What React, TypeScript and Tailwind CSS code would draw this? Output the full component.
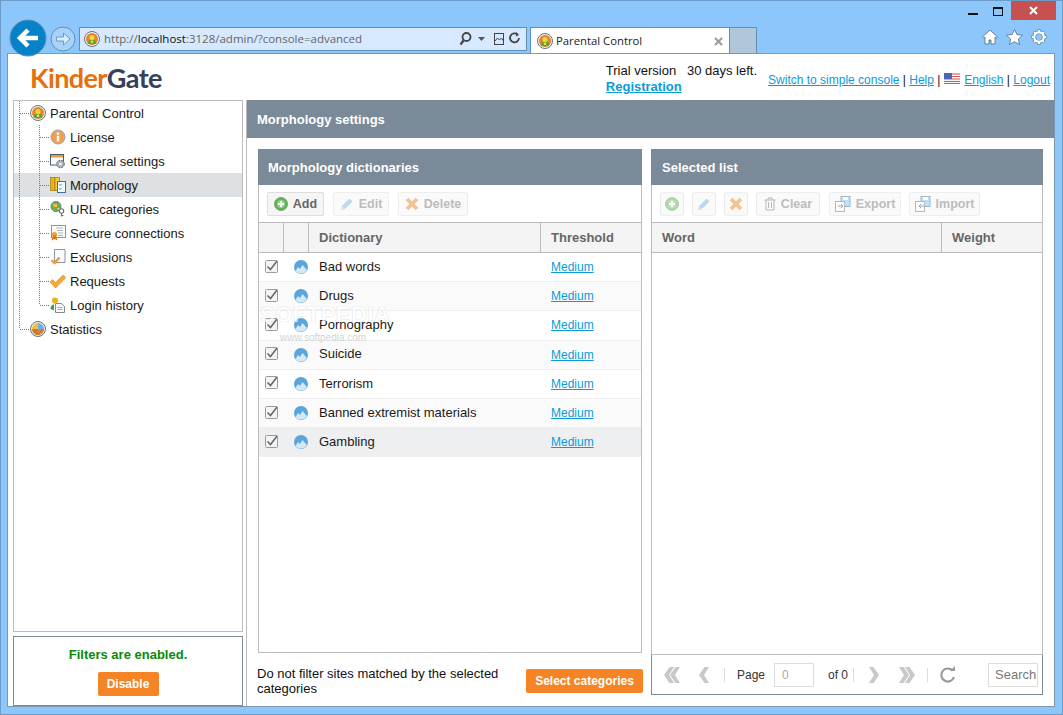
import * as React from 'react';

const ARIAL = "font-['Liberation_Sans',Arial,sans-serif]";

function AppIcon({ size = 16 }: { size?: number }) {
  return (
    <svg width={size} height={size} viewBox="0 0 16 16" className="shrink-0">
      <circle cx="8" cy="8" r="7.5" fill="#f2f2f2" stroke="#6b7280" strokeWidth="1" />
      <circle cx="8" cy="8" r="6" fill="#e8832a" />
      <path d="M3.6 12 C4 9.5 5.5 9 8 9 C10.5 9 12 9.5 12.4 12 C11 13.6 5 13.6 3.6 12Z" fill="#3fae3a" />
      <circle cx="8" cy="6.4" r="2.5" fill="#f6d43c" />
      <rect x="6.8" y="9.5" width="2.4" height="2.5" fill="#f6d43c" />
    </svg>
  );
}

function LicenseIcon() {
  return (
    <svg width="16" height="16" viewBox="0 0 16 16" className="shrink-0">
      <circle cx="8" cy="8" r="7" fill="#f0a050" stroke="#9aa3ad" />
      <circle cx="8" cy="4.6" r="1.3" fill="#fff" />
      <rect x="6.8" y="6.8" width="2.4" height="5.6" fill="#fff" />
    </svg>
  );
}

function SettingsIcon() {
  return (
    <svg width="16" height="16" viewBox="0 0 16 16" className="shrink-0">
      <rect x="0.5" y="1.5" width="13" height="10.5" fill="#fff" stroke="#4a5a70" />
      <rect x="1" y="2" width="12" height="2.5" fill="#ee9a3a" />
      <circle cx="10.5" cy="11" r="3.8" fill="#aab4bf" stroke="#5f6b78" strokeDasharray="2 1" />
      <circle cx="10.5" cy="11" r="1.3" fill="#fff" />
    </svg>
  );
}

function MorphologyIcon() {
  return (
    <svg width="16" height="16" viewBox="0 0 16 16" className="shrink-0">
      <rect x="0.5" y="0.5" width="4.500" height="13" fill="#e8b318" stroke="#9c7a10" strokeWidth="0.7" />
      <rect x="5" y="0.5" width="4.500" height="13" fill="#f3cb38" stroke="#9c7a10" strokeWidth="0.7" />
      <rect x="7.5" y="4.5" width="8" height="11" fill="#f4f9ff" stroke="#3f6f9f" />
      <path d="M9 7.5l1 1 1.6-1.6M9 11.5l1 1 1.6-1.6" fill="none" stroke="#2f80c8" strokeWidth="1" />
    </svg>
  );
}

function UrlIcon() {
  return (
    <svg width="16" height="16" viewBox="0 0 16 16" className="shrink-0">
      <circle cx="6" cy="5.5" r="5" fill="#6fb04a" stroke="#5a7fa0" />
      <path d="M3 3h4v3H4zM7 7h3v2H8z" fill="#f0c040" />
      <circle cx="11.5" cy="10" r="2.2" fill="#fff" stroke="#5a6f88" strokeWidth="1.1" />
      <path d="M11.5 12v3.5M11.5 14.5h2" stroke="#5a6f88" strokeWidth="1.1" />
    </svg>
  );
}

function SecureIcon() {
  return (
    <svg width="16" height="16" viewBox="0 0 16 16" className="shrink-0">
      <rect x="1.5" y="0.5" width="14" height="12" fill="#fdfdfd" stroke="#8a96a3" />
      <path d="M6 3h7M7 5.5h6M8 8h5M8 10.500h5" stroke="#a8b2bc" />
      <circle cx="4.5" cy="9.5" r="2.6" fill="#f0a030" />
      <path d="M1.500 15.500l1.500-5h3l1.500 5-3-1.500z" fill="#e07818" />
    </svg>
  );
}

function ExclusionsIcon() {
  return (
    <svg width="16" height="16" viewBox="0 0 16 16" className="shrink-0">
      <path d="M4.500 0.500h10.500v13h-10.500z" fill="#f8fafc" stroke="#8a96a3" />
      <path d="M1.500 11l3 3 5-5.500" fill="none" stroke="#ee9a3a" strokeWidth="2.400" />
    </svg>
  );
}

function CheckIcon() {
  return (
    <svg width="16" height="16" viewBox="0 0 16 16" className="shrink-0">
      <path d="M0 9l2.500-2.500 3 3L13 2l3 2.500L5.500 15z" fill="#f4a838" stroke="#dd8a20" strokeWidth="0.600" />
    </svg>
  );
}

function LoginIcon() {
  return (
    <svg width="16" height="16" viewBox="0 0 16 16" className="shrink-0">
      <circle cx="5" cy="3.5" r="3" fill="#e8b318" />
      <path d="M0.5 12c0-3 1.500-4.500 3.500-4.500v6z" fill="#35a838" />
      <path d="M5.500 6.500h6l3 3v6h-9z" fill="#fbfcfd" stroke="#7d8a97" />
      <path d="M7.500 10.500h5M7.500 12.500h5" stroke="#9aa5b0" />
    </svg>
  );
}

function StatsIcon() {
  return (
    <svg width="16" height="16" viewBox="0 0 16 16" className="shrink-0">
      <circle cx="8" cy="8" r="7.5" fill="#e9eef3" stroke="#6b7280" />
      <path d="M8 8V2a6 6 0 0 1 6 6z" fill="#6fb0e8" />
      <path d="M8 8h6a6 6 0 0 1-3 5.200z" fill="#d27a2e" />
      <path d="M8 8l3 5.200A6 6 0 0 1 2 8z" fill="#d27a2e" />
      <path d="M8 8H2a6 6 0 0 1 6-6z" fill="#f2c230" />
    </svg>
  );
}

function TreeLines({ level, last }: { level: number; last?: boolean }) {
  const w = level === 1 ? 16 : 36;
  return (
    <svg width={w} height="24" className="shrink-0" stroke="#777" strokeDasharray="1 1" fill="none">
      {level === 1 ? (
        <>
          <path d={last ? 'M5.5 0V12' : 'M5.5 0V24'} />
          <path d="M6 12.500H16" />
        </>
      ) : (
        <>
          <path d="M5.500 0V24" />
          <path d={last ? 'M25.500 0V12' : 'M25.500 0V24'} />
          <path d="M26 12.500H36" />
        </>
      )}
    </svg>
  );
}

const treeItems = [
  { label: 'License', icon: <LicenseIcon /> },
  { label: 'General settings', icon: <SettingsIcon /> },
  { label: 'Morphology', icon: <MorphologyIcon />, selected: true },
  { label: 'URL categories', icon: <UrlIcon /> },
  { label: 'Secure connections', icon: <SecureIcon /> },
  { label: 'Exclusions', icon: <ExclusionsIcon /> },
  { label: 'Requests', icon: <CheckIcon /> },
  { label: 'Login history', icon: <LoginIcon />, last: true },
];

function Tree() {
  return (
    <div className="flex-1 border border-[#bcbcbc] text-[13px] text-[#1a1a1a]">
      <div className="flex h-[24px] items-center">
        <TreeLines level={1} />
        <AppIcon />
        <span className="ml-[4px] pt-[2px]">Parental Control</span>
      </div>
      {treeItems.map((item) => (
        <div key={item.label} className={`flex h-[24px] items-center ${item.selected ? 'bg-[#dde1e3]' : ''}`}>
          <TreeLines level={2} last={item.last} />
          {item.icon}
          <span className="ml-[4px] pt-[2px]">{item.label}</span>
        </div>
      ))}
      <div className="flex h-[24px] items-center">
        <TreeLines level={1} last />
        <StatsIcon />
        <span className="ml-[4px] pt-[2px]">Statistics</span>
      </div>
    </div>
  );
}

function PlusIcon() {
  return (
    <svg width="14" height="14" viewBox="0 0 14 14" className="shrink-0">
      <circle cx="7" cy="7" r="6.500" fill="#58b84e" stroke="#7f9f7a" />
      <circle cx="7" cy="7" r="4" fill="#8fd486" />
      <path d="M7 4v6M4 7h6" stroke="#fff" strokeWidth="2" />
    </svg>
  );
}

function PencilIcon() {
  return (
    <svg width="14" height="14" viewBox="0 0 14 14" className="shrink-0">
      <path d="M1 13l1-4 7.500-7.500 3 3L5 12z" fill="#7db8e8" />
      <path d="M1 13l1-4 3 3z" fill="#f5d07a" />
    </svg>
  );
}

function CrossIcon() {
  return (
    <svg width="14" height="14" viewBox="0 0 14 14" className="shrink-0">
      <path d="M2 2l10 10M12 2L2 12" stroke="#f08a28" strokeWidth="3.600" />
    </svg>
  );
}

function TrashIcon() {
  return (
    <svg width="12" height="14" viewBox="0 0 12 14" fill="none" stroke="#777" className="shrink-0">
      <path d="M0.500 3h11M4 3V1h4v2M2 3v10h8V3M4.500 5v6M7.500 5v6" />
    </svg>
  );
}

function DiskIcon({ flip }: { flip?: boolean }) {
  return (
    <svg width="16" height="16" viewBox="0 0 16 16" className="shrink-0">
      <rect x="6" y="0.500" width="9" height="10" fill="#8fc3ee" stroke="#3f78ae" />
      <rect x="8" y="1" width="5" height="3" fill="#fff" />
      <rect x="0.500" y="5.500" width="9" height="10" fill="#fff" stroke="#6a7a8a" />
      <path d={flip ? 'M9 10H4l2-2M4 10l2 2' : 'M3 10h5l-2-2M8 10l-2 2'} fill="none" stroke="#4a5a6a" />
    </svg>
  );
}

function ToolBtn({
  label,
  icon,
  disabled,
  className = '',
}: {
  label?: string;
  icon: React.ReactNode;
  disabled?: boolean;
  className?: string;
}) {
  return (
    <div
      className={`flex h-[24px] items-center justify-center gap-[5px] rounded-[2px] border text-[12.5px] font-bold ${
        disabled ? 'border-[#eeeeee] bg-[#fafafa] text-[#bcbcbc]' : 'border-[#dedede] bg-[#f5f5f5] text-[#666]'
      } ${className}`}
    >
      <span className={disabled ? 'flex opacity-50' : 'flex'}>{icon}</span>
      {label && <span className="pt-[1px]">{label}</span>}
    </div>
  );
}

function CheckBox() {
  return (
    <svg width="14" height="14" viewBox="0 0 14 14" className="shrink-0">
      <rect x="0.500" y="0.500" width="12" height="12" rx="1" fill="#f4f4f4" stroke="#9a9a9a" />
      <path d="M2.500 6.500l3 3 6.500-8.500" fill="none" stroke="#666" strokeWidth="1.500" />
    </svg>
  );
}

function Ball() {
  return (
    <svg width="14" height="14" viewBox="0 0 14 14" className="shrink-0">
      <circle cx="7" cy="7" r="7" fill="#5aa5dc" />
      <path d="M1.500 11 L4 7 L6 9 L8.500 5 L12 9 L13 10 A7 7 0 0 1 1.500 11Z" fill="#d5e8f6" />
    </svg>
  );
}

const dictionaries = [
  'Bad words',
  'Drugs',
  'Pornography',
  'Suicide',
  'Terrorism',
  'Banned extremist materials',
  'Gambling',
];

function DictRow({ name, index }: { name: string; index: number }) {
  const hot = index === dictionaries.length - 1;
  return (
    <div
      className={`flex h-[29.2px] items-center border-b border-[#efefef] text-[13px] text-[#1a1a1a] ${
        hot ? 'bg-[#eeeff1]' : index % 2 ? 'bg-[#fafafa]' : 'bg-white'
      }`}
    >
      <div className="mb-[1px] flex w-[25px] justify-center pl-[1px]">
        <CheckBox />
      </div>
      <div className="flex w-[25px] justify-center pl-[8px]">
        <Ball />
      </div>
      <div className="mb-[1px] w-[232px] pl-[10px]">{name}</div>
      <a className="pl-[10px] text-[12px] text-[#0a9bd8] underline">Medium</a>
    </div>
  );
}

function Head({ className = '', children }: { className?: string; children?: React.ReactNode }) {
  return (
    <div className={`flex h-full items-center border-r border-[#bcbcbc] pl-[10px] ${className}`}>{children}</div>
  );
}

function Sep() {
  return <div className="h-[14px] w-px bg-[#dddddd]" />;
}

function Chevrons({ dir, double }: { dir: 'l' | 'r'; double?: boolean }) {
  const one = dir === 'l' ? 'M10 0L5 8l5 8H5.500L0 8l5.500-8z' : 'M0 0l5 8-5 8h4.500L10 8 4.500 0z';
  return (
    <svg width={double ? 16 : 10} height="16" viewBox={double ? '0 0 16 16' : '0 0 10 16'} fill="#c8c8c8" className="shrink-0">
      <path d={one} />
      {double && <path d={one} transform="translate(6 0)" />}
    </svg>
  );
}

export default function App() {
  return (
    <div className={`relative flex h-[715px] w-[1063px] flex-col overflow-hidden border border-[#6a9ac8] bg-[#8cc6fa] ${ARIAL}`}>
      {/* window buttons */}
      <div className="flex h-[19px] items-start justify-end pr-[6px]">
        <div className="mt-[12px] mr-[15px] h-[2px] w-[10px] bg-[#111]" />
        <div className="mt-[6px] mr-[8px] h-[9px] w-[10px] border border-t-2 border-[#111]" />
        <div className="flex h-[19px] w-[45px] items-center justify-center bg-[#c75050] text-white">
          <svg width="9" height="9" viewBox="0 0 9 9" stroke="#fff" strokeWidth="2">
            <path d="M1 1l7 7M8 1L1 8" />
          </svg>
        </div>
      </div>

      {/* browser toolbar */}
      <div className="flex h-[34px] items-start pl-[8px]">
        <svg width="38" height="38" viewBox="0 0 38 38" className="z-10 -mt-[1px] shrink-0">
          <circle cx="19" cy="19" r="18" fill="#0683c8" stroke="#5f90b8" />
          <path d="M29 19H12M19 11l-8 8 8 8" fill="none" stroke="#fff" strokeWidth="4.500" />
        </svg>
        <svg width="26" height="26" viewBox="0 0 26 26" className="mt-[6px] ml-[3px] shrink-0">
          <circle cx="13" cy="13" r="12" fill="#a6d2fb" stroke="#5f90b8" />
          <path d="M6.500 11h7V7l6.500 6-6.500 6v-4h-7z" fill="#d8ecff" stroke="#6f9cc0" />
        </svg>
        <div className="mt-[7px] ml-[3px] flex h-[24px] w-[448px] items-center border border-[#5f90b8] bg-[#d6e9fe] pr-[4px] pl-[4px] font-['Open_Sans',sans-serif] text-[11.5px] text-[#666]">
          <AppIcon />
          <span className="ml-[4px] flex-1">
            http://<span className="text-[#111]">localhost</span>:3128/admin/?console=advanced
          </span>
          <svg width="62" height="16" viewBox="0 0 62 16" fill="none" stroke="#444" className="shrink-0">
            <circle cx="6.500" cy="6" r="4" strokeWidth="1.800" />
            <path d="M3.500 9.500L0.500 13.500" strokeWidth="2.200" />
            <path d="M18 6h7l-3.500 4z" fill="#555" stroke="none" />
            <rect x="34.500" y="2.500" width="9" height="11" />
            <path d="M35 10l2.500-3 2 2 2-2 2 3" />
            <path d="M59 7a4.500 4.500 0 1 1-1.500-3.500" strokeWidth="1.800" />
            <path d="M56 1l3 3-3 1.500z" fill="#444" stroke="none" />
          </svg>
        </div>
        <div className="mt-[7px] ml-[3px] flex h-[27px] w-[200px] items-center border border-b-0 border-[#5f90b8] bg-white pr-[6px] pl-[6px] font-['Open_Sans',sans-serif] text-[11.3px] text-[#222]">
          <AppIcon />
          <span className="ml-[3px] flex-1">Parental Control</span>
          <svg width="9" height="9" viewBox="0 0 9 9" stroke="#999" strokeWidth="2">
            <path d="M1 1l7 7M8 1L1 8" />
          </svg>
        </div>
        <div className="mt-[7px] h-[27px] w-[27px] border border-b-0 border-l-0 border-[#5f90b8] bg-[#b0c6da]" />
        <div className="mt-[9px] ml-auto flex items-center gap-[8px] pr-[15px]">
          <svg width="16" height="16" viewBox="0 0 16 16" fill="#fff" stroke="#4a6a88" strokeWidth="0.800">
            <path d="M8 1L0.500 8l1.300 1L3 8v7h4v-4h2v4h4V8l1.200 1 1.300-1z" />
          </svg>
          <svg width="17" height="16" viewBox="0 0 17 16" fill="#fff" stroke="#4a6a88" strokeWidth="0.800">
            <path d="M8.500 0.500l2.400 5 5.600 0.700-4.100 3.800 1.100 5.500-5-2.800-5 2.800 1.100-5.500L0.500 6.200l5.600-0.700z" />
          </svg>
          <svg width="16" height="16" viewBox="0 0 16 16" fill="none">
            <path d="M8 0.500v3M8 12.500v3M0.500 8h3M12.500 8h3M2.700 2.700l2 2M11.300 11.300l2 2M13.300 2.700l-2 2M4.700 11.300l-2 2" stroke="#4a6a88" strokeWidth="3" />
            <circle cx="8" cy="8" r="4.800" stroke="#4a6a88" strokeWidth="3.400" />
            <path d="M8 1v3M8 12v3M1 8h3M12 8h3M3 3l2 2M11 11l2 2M13 3l-2 2M5 11l-2 2" stroke="#fff" strokeWidth="2" />
            <circle cx="8" cy="8" r="4.800" stroke="#fff" strokeWidth="2.400" />
          </svg>
        </div>
      </div>

      {/* page */}
      <div className="mr-[8px] mb-[8px] ml-[7px] flex flex-1 flex-col overflow-hidden bg-white text-[14px] shadow-[0_0_0_1px_#7a97b4]">
        <div className="flex h-[46px] shrink-0 items-center pr-[4px] pl-[22px]">
          <div className="font-['Lato',sans-serif] text-[27px] leading-none font-bold tracking-[-0.6px]">
            <span className="text-[#e86f0c]">Kinder</span>
            <span className="text-[#363f5c]">Gate</span>
          </div>
          <div className="mt-[4px] ml-auto text-[13px] leading-[16px] text-[#111]">
            <div className="whitespace-pre">Trial version   30 days left.</div>
            <a className="font-bold text-[#0a9bd8] underline">Registration</a>
          </div>
          <div className="mt-[6px] ml-[11px] flex items-center gap-[3.35px] text-[12px] text-[#111]">
            <a className="text-[#0a9bd8] underline">Switch to simple console</a>
            <span>|</span>
            <a className="text-[#0a9bd8] underline">Help</a>
            <span>|</span>
            <svg width="16" height="11" viewBox="0 0 16 11" className="mr-[1px] mb-[4px] shrink-0">
              <rect width="16" height="11" fill="#f4f4f4" />
              <path d="M0 1h16M0 3.500h16M0 6h16M0 8.500h16M0 10.500h16" stroke="#d8585a" />
              <rect width="8" height="6" fill="#4a66b8" />
            </svg>
            <a className="text-[#0a9bd8] underline">English</a>
            <span>|</span>
            <a className="text-[#0a9bd8] underline">Logout</a>
          </div>
        </div>

        <div className="flex min-h-0 flex-1">
          {/* left column */}
          <div className="flex w-[235px] shrink-0 flex-col gap-[4px] pl-[5px]">
            <Tree />
            <div className="flex h-[70px] shrink-0 flex-col items-center border border-[#7a8a98] pt-[8px]">
              <div className="text-[13px] font-bold text-[#0a8a0a]">Filters are enabled.</div>
              <div className="mt-[7px] flex h-[24px] w-[61px] items-center justify-center rounded-[2px] bg-[#f58426] text-[12px] font-bold text-white">
                Disable
              </div>
            </div>
          </div>

          {/* main */}
          <div className="ml-[3px] flex min-w-0 flex-1 flex-col border-l border-[#bcbcbc]">
            <div className="flex h-[38px] shrink-0 items-center bg-[#7a8a98] pt-[1px] pl-[10px] text-[13px] font-bold text-white">
              Morphology settings
            </div>
            <div className="flex min-h-0 flex-1 gap-[9px] pt-[11px] pr-[11px] pb-[11px] pl-[11px]">
              {/* dictionaries */}
              <div className="flex w-[384px] shrink-0 flex-col">
                <div className="flex h-[36px] shrink-0 items-center bg-[#7a8a98] pt-[1px] pl-[10px] text-[13px] font-bold text-white">
                  Morphology dictionaries
                </div>
                <div className="flex h-[468px] shrink-0 flex-col border border-t-0 border-[#bcbcbc]">
                  <div className="flex h-[37px] shrink-0 items-center gap-[9px] pl-[8px]">
                    <ToolBtn label="Add" icon={<PlusIcon />} className="w-[57px]" />
                    <ToolBtn label="Edit" icon={<PencilIcon />} disabled className="w-[56px]" />
                    <ToolBtn label="Delete" icon={<CrossIcon />} disabled className="w-[70px]" />
                  </div>
                  <div className="flex h-[31px] shrink-0 items-center border-y border-[#bcbcbc] bg-[#f4f4f4] text-[13px] font-bold text-[#666]">
                    <Head className="w-[25px]" />
                    <Head className="w-[25px]" />
                    <Head className="w-[232px]">Dictionary</Head>
                    <div className="pl-[10px]">Threshold</div>
                  </div>
                  {dictionaries.map((name, i) => (
                    <DictRow key={name} name={name} index={i} />
                  ))}
                </div>
                <div className="flex flex-1 items-center justify-between pt-[13px]">
                  <div className="-ml-[1px] w-[255px] text-[13px] leading-[15px] text-[#111]">
                    Do not filter sites matched by the selected categories
                  </div>
                  <div className="mr-[-1px] flex h-[24px] w-[117px] items-center justify-center rounded-[2px] bg-[#f58426] text-[12px] font-bold text-white">
                    Select categories
                  </div>
                </div>
              </div>

              {/* selected list */}
              <div className="flex min-w-0 flex-1 flex-col">
                <div className="flex h-[36px] shrink-0 items-center bg-[#7a8a98] pt-[1px] pl-[11px] text-[13px] font-bold text-white">
                  Selected list
                </div>
                <div className="flex min-h-0 flex-1 flex-col border border-t-0 border-[#bcbcbc]">
                  <div className="flex h-[37px] shrink-0 items-center gap-[8px] pl-[8px]">
                    <ToolBtn icon={<PlusIcon />} disabled className="w-[24px]" />
                    <ToolBtn icon={<PencilIcon />} disabled className="w-[24px]" />
                    <ToolBtn icon={<CrossIcon />} disabled className="w-[24px]" />
                    <ToolBtn label="Clear" icon={<TrashIcon />} disabled className="mr-[1px] w-[64px]" />
                    <ToolBtn label="Export" icon={<DiskIcon />} disabled className="w-[72px]" />
                    <ToolBtn label="Import" icon={<DiskIcon flip />} disabled className="w-[71px]" />
                  </div>
                  <div className="flex h-[31px] shrink-0 items-center border-y border-[#bcbcbc] bg-[#f4f4f4] text-[13px] font-bold text-[#666]">
                    <Head className="w-[290px]">Word</Head>
                    <div className="pl-[10px]">Weight</div>
                  </div>
                  <div className="flex-1" />
                </div>
                <div className="flex h-[40px] shrink-0 items-center border border-t-0 border-[#7a8a98] pl-[12px] text-[12px] text-[#333]">
                  <Chevrons dir="l" double />
                  <div className="ml-[19px]"><Chevrons dir="l" /></div>
                  <div className="ml-[15px]"><Sep /></div>
                  <span className="ml-[12px]">Page</span>
                  <div className="ml-[9px] flex h-[24px] w-[40px] items-center border border-[#ddd] pl-[7px] text-[#aaa]">0</div>
                  <span className="ml-[14px]">of 0</span>
                  <div className="ml-[5px]"><Sep /></div>
                  <div className="ml-[15px]"><Chevrons dir="r" /></div>
                  <div className="ml-[20px]"><Chevrons dir="r" double /></div>
                  <div className="ml-[12px]"><Sep /></div>
                  <svg width="18" height="18" viewBox="0 0 18 18" fill="none" stroke="#999" strokeWidth="2.200" className="ml-[11px] shrink-0">
                    <path d="M15 11a6.500 6.500 0 1 1-1.500-6.500" />
                    <path d="M11 5h5V0z" fill="#999" stroke="none" />
                  </svg>
                  <div className="ml-[31px] flex h-[24px] w-[50px] items-center overflow-hidden border border-[#ddd] pl-[6px] text-[13px] text-[#777]">
                    Search
                  </div>
                </div>
              </div>
            </div>
          </div>
        </div>
      </div>

      {/* watermark */}
      <div className="pointer-events-none absolute top-[301px] left-[259px] opacity-70">
        <div className="text-[22px] leading-[26px] font-bold tracking-[0.5px] text-white [text-shadow:0_0_1px_#aaa]">SOFTPEDIA</div>
        <div className="mt-[4px] ml-[20px] text-[10px] leading-[12px] text-[#c4c4c4]">www.softpedia.com</div>
      </div>
    </div>
  );
}
